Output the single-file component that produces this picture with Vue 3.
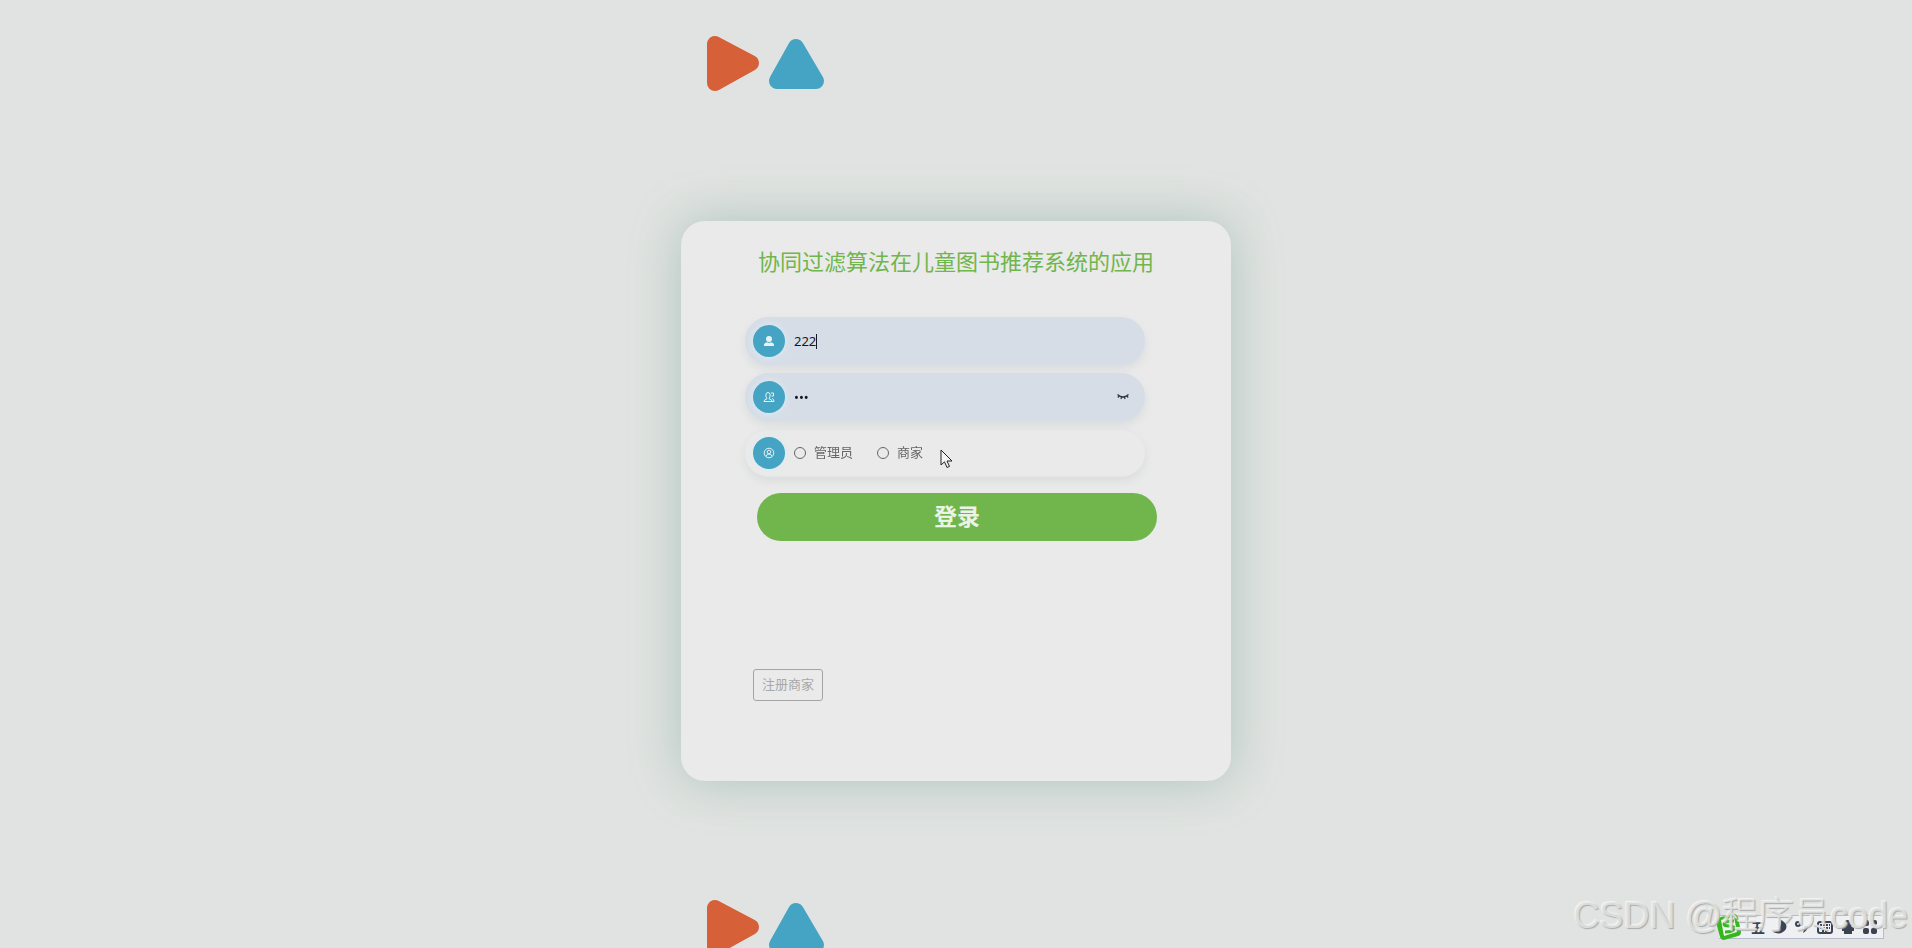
<template>
  <main class="login-page">
    <form class="login-card" @submit.prevent="login">
      <h1 class="title">协同过滤算法在儿童图书推荐系统的应用</h1>

      <div class="fields">
        <div class="field filled">
          <label class="badge" for="username" aria-label="账号">
            <svg width="12" height="12" viewBox="0 0 12 12" fill="#e8f2f5">
              <circle cx="6" cy="4" r="3" />
              <path d="M1 11V9.500Q1.500 7.500 4 7.200L6 8L8 7.200Q10.500 7.500 11 9.500V11Z" />
            </svg>
          </label>
          <input id="username" ref="usernameInput" v-model="form.username" class="text-input" type="text" autocomplete="off" />
          <span v-if="form.username === '222'" class="caret"></span>
        </div>

        <div class="field filled">
          <label class="badge" for="password" aria-label="密码">
            <svg width="12" height="12" viewBox="0 0 12 12" fill="none" stroke="#e8f2f5">
              <path d="M1 10.500Q1 8.500 4 7.800Q2.800 6 2.800 4Q3 1.500 5 1.500Q7.200 1.500 7.200 4Q7.200 6 6 7.800Q9 8.500 9 10.500Z" />
              <path d="M8 2H10.500V5H8.500M9 7.500Q11 8 11 10.500H9" />
            </svg>
          </label>
          <input id="password" v-model="form.password" class="text-input" :type="showPassword ? 'text' : 'password'" />
          <button class="eye" type="button" aria-label="显示密码" @click="showPassword = !showPassword">
            <svg width="12" height="8" viewBox="0 0 12 8" fill="none" stroke="#2b3443" stroke-width="1.200">
              <path d="M0.500 1.500Q6 6.500 11.500 1.500M2.200 3L0.800 4.500M4.500 4L4 6M7.500 4L8 6M9.800 3L11.200 4.500" />
            </svg>
          </button>
        </div>

        <div class="field" role="radiogroup" aria-label="角色">
          <span class="badge">
            <svg width="12" height="12" viewBox="0 0 12 12" fill="none" stroke="#e8f2f5">
              <circle cx="6" cy="6" r="4.800" />
              <circle cx="6" cy="5" r="1.800" />
              <path d="M3 9.300Q3.800 7 6 7Q8.200 7 9 9.300" />
            </svg>
          </span>
          <div class="roles">
            <label v-for="role in roles" :key="role" class="role">
              <input v-model="form.role" type="radio" name="role" :value="role" />
              <span class="role-name">{{ role }}</span>
            </label>
          </div>
        </div>
      </div>

      <button class="login-btn" type="submit">登录</button>
      <button class="register-btn" type="button">注册商家</button>
    </form>

    <svg class="cursor" width="14" height="20" viewBox="0 0 14 20">
      <path d="M1 1V16L4.500 12.800L7 18.500L9.500 17.400L7 12H12Z" fill="#f4f4f4" stroke="#222" />
    </svg>

    <div class="ime">
      <svg class="ime-logo" width="28" height="28" viewBox="0 0 28 28">
        <path d="M6 4L19 1Q22 1 23 4L26 19Q26 22 23 23L9 27Q6 27 5 24L1 9Q1 6 6 4Z" fill="#35b61f" />
        <path d="M6 7L19 4L22 19L9 23Z" fill="#eef6ec" />
        <path d="M19 8Q10 8 9 11Q9 13 14 13Q20 13 19 16Q18 19 10 19" fill="none" stroke="#35b61f" stroke-width="3" />
      </svg>
      <span class="ime-mode">五</span>
      <svg width="14" height="14" viewBox="0 0 14 14">
        <path d="M8 0Q15 3 13 9Q8 16 0 12Q9 10 8 0Z" fill="#3b4250" />
      </svg>
      <svg width="14" height="14" viewBox="0 0 14 14">
        <circle cx="3" cy="4" r="2" fill="none" stroke="#3b4250" stroke-width="2" />
        <path d="M9 6H13Q13 10 8 13Q10 9 9 6Z" fill="#3b4250" />
      </svg>
      <svg width="16" height="14" viewBox="0 0 16 14" fill="none" stroke="#3b4250" stroke-width="2">
        <rect x="1" y="2" width="14" height="11" rx="2" />
        <path d="M3 5H13M3 8H13M5 11H11" stroke-dasharray="2 1" />
      </svg>
      <svg width="14" height="14" viewBox="0 0 14 14" fill="#3b4250">
        <circle cx="7" cy="4" r="4" />
        <path d="M1 8L5 6H9L13 8V11H11V14H3V11H1Z" />
      </svg>
      <svg width="14" height="14" viewBox="0 0 14 14" fill="#3b4250">
        <rect x="0" y="0" width="6" height="6" rx="2" />
        <rect x="8" y="0" width="6" height="6" rx="2" />
        <rect x="0" y="8" width="6" height="6" rx="2" />
        <rect x="8" y="8" width="6" height="6" rx="2" />
      </svg>
    </div>
    <div class="watermark">CSDN @程序员code</div>
  </main>
</template>

<script setup>
import { ref, reactive, onMounted } from 'vue'

const roles = ['管理员', '商家']
const usernameInput = ref(null)
const showPassword = ref(false)

const form = reactive({
  username: '222',
  password: '222',
  role: ''
})

const login = () => {
  showPassword.value = false
}

onMounted(() => {
  usernameInput.value.focus()
})
</script>

<style>
body {
  margin: 0;
}
</style>

<style scoped>
.login-page {
  position: relative;
  box-sizing: border-box;
  min-height: 100vh;
  padding: 24px;
  display: flex;
  align-items: center;
  justify-content: center;
  overflow: hidden;
  font-family: "Noto Sans", "Noto Sans CJK SC", sans-serif;
  font-size: 13px;
  color: #666;
  background: #e0e3e1 url("data:image/svg+xml,%3Csvg xmlns='http://www.w3.org/2000/svg' width='552' height='864'%3E%3Cg stroke-width='16' stroke-linejoin='round'%3E%3Cpath d='M35 44V83L71 63Z' fill='%23d66038' stroke='%23d66038'/%3E%3Cpath d='M116 47L97 81H136Z' fill='%2345a4c3' stroke='%2345a4c3'/%3E%3C/g%3E%3C/svg%3E") repeat-y top center;
}

.login-card {
  box-sizing: border-box;
  width: 550px;
  max-width: 100%;
  min-height: 560px;
  margin-top: 54px;
  padding: 22px 72px 80px;
  display: flex;
  flex-direction: column;
  align-items: flex-start;
  border-radius: 24px;
  background: #eaeaea;
  box-shadow: 0 0 50px rgba(100, 150, 135, 0.4);
}

.title {
  align-self: center;
  margin: 0 0 38px;
  font-size: 22px;
  font-weight: 400;
  line-height: 36px;
  color: #70b64c;
}

.fields {
  width: 400px;
  max-width: 100%;
  margin-left: -8px;
  display: flex;
  flex-direction: column;
  gap: 8px;
}

.field {
  position: relative;
  box-sizing: border-box;
  height: 48px;
  padding: 0 16px 0 8px;
  display: flex;
  align-items: center;
  gap: 9px;
  border: 1px solid #e4e5e6;
  border-width: 1px 0;
  border-radius: 24px;
  box-shadow: 0 4px 8px rgba(100, 120, 130, 0.12);
}

.filled {
  border-color: #d6dde7;
  background: #d6dde7;
}

.badge {
  flex: none;
  width: 32px;
  height: 32px;
  display: flex;
  align-items: center;
  justify-content: center;
  border-radius: 50%;
  background: #45a4c3;
  box-shadow: 0 0 6px 1px #dcebf3;
}

.text-input {
  flex: 1;
  min-width: 0;
  height: 32px;
  padding: 0;
  border: 0;
  outline: 0;
  font: inherit;
  color: #111827;
  caret-color: transparent;
  background: transparent;
}

.caret {
  position: absolute;
  left: 71px;
  top: 16px;
  width: 1px;
  height: 15px;
  background: #111827;
}

.eye {
  width: 12px;
  height: 16px;
  padding: 0;
  display: flex;
  align-items: center;
  border: 0;
  background: transparent;
}

.roles {
  display: flex;
  gap: 24px;
}

.role {
  display: flex;
  align-items: center;
  gap: 8px;
}

.role-name {
  padding-bottom: 4px;
}

.role input {
  appearance: none;
  box-sizing: border-box;
  width: 12px;
  height: 12px;
  margin: 0;
  border: 1px solid #666;
  border-radius: 50%;
}

.role input:checked {
  background: #45a4c3;
}

.login-btn {
  width: 400px;
  max-width: 100%;
  height: 48px;
  margin-top: 16px;
  margin-left: 4px;
  padding: 0 0 4px;
  border: 0;
  border-radius: 24px;
  font-family: inherit;
  font-size: 23px;
  font-weight: 700;
  color: #eaf3e6;
  background: #70b64c;
}

.register-btn {
  height: 32px;
  margin-top: auto;
  padding: 0 8px 4px;
  border: 1px solid #a4a4a4;
  border-radius: 3px;
  font: inherit;
  color: #a8a8a8;
  background: transparent;
}

.cursor {
  position: absolute;
  left: calc(50% - 16px);
  top: 449px;
  pointer-events: none;
}

.ime {
  position: absolute;
  right: 28px;
  bottom: 9px;
  height: 22px;
  padding-right: 6px;
  display: flex;
  align-items: center;
  gap: 8px;
  border: 1px solid #b4bccb;
  border-left: 0;
  background: #eef0f3;
}

.ime-logo {
  margin-left: -4px;
}

.ime-mode {
  font-size: 14px;
  font-weight: 700;
  color: #3b4250;
}

.watermark {
  position: absolute;
  right: 4px;
  bottom: 8px;
  font-family: "Liberation Sans", "Noto Sans CJK SC", sans-serif;
  font-size: 36px;
  font-weight: 300;
  line-height: 48px;
  white-space: nowrap;
  color: rgba(226, 229, 227, 0.85);
  text-shadow: 1px 1px 1px #aaa, -1px -1px 1px #f4f4f4;
  pointer-events: none;
}
</style>
